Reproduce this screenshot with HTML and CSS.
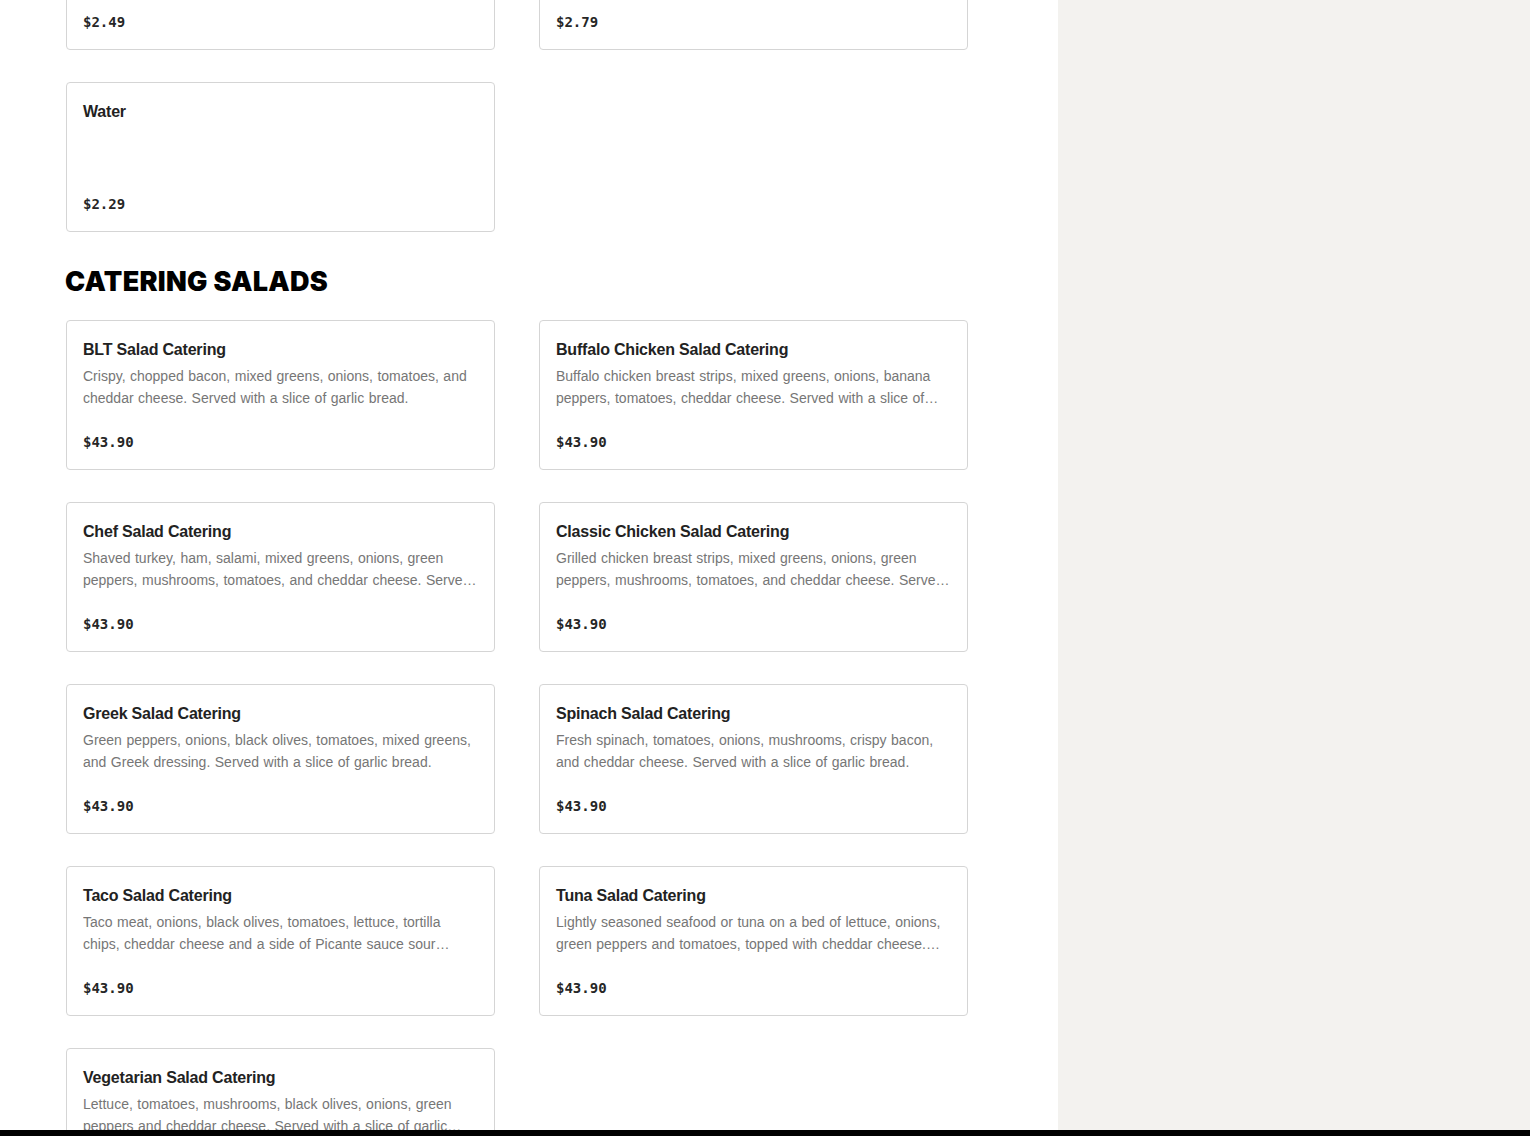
FILE: index.html
```html
<!DOCTYPE html>
<html lang="en">
<head>
<meta charset="utf-8">
<title>Catering Menu</title>
<link rel="stylesheet" href="styles.css">
</head>
<body>
<div class="layout">
  <main class="menu">
    <section class="section section-first">
      <div class="grid">
        <div class="card"><div class="title">Soft Drink</div><div class="desc"></div><div class="price">$2.49</div></div>
        <div class="card"><div class="title">Iced Tea</div><div class="desc"></div><div class="price">$2.79</div></div>
        <div class="card"><div class="title">Water</div><div class="desc"></div><div class="price">$2.29</div></div>
      </div>
    </section>
    <section class="section">
      <h2 class="heading">CATERING SALADS</h2>
      <div class="grid">
        <div class="card"><div class="title">BLT Salad Catering</div><div class="desc">Crispy, chopped bacon, mixed greens, onions, tomatoes, and cheddar cheese. Served with a slice of garlic bread.</div><div class="price">$43.90</div></div>
        <div class="card"><div class="title">Buffalo Chicken Salad Catering</div><div class="desc">Buffalo chicken breast strips, mixed greens, onions, banana peppers, tomatoes, cheddar cheese. Served with a slice of garlic bread.</div><div class="price">$43.90</div></div>
        <div class="card"><div class="title">Chef Salad Catering</div><div class="desc">Shaved turkey, ham, salami, mixed greens, onions, green peppers, mushrooms, tomatoes, and cheddar cheese. Served with a slice of garlic bread.</div><div class="price">$43.90</div></div>
        <div class="card"><div class="title">Classic Chicken Salad Catering</div><div class="desc">Grilled chicken breast strips, mixed greens, onions, green peppers, mushrooms, tomatoes, and cheddar cheese. Served with a slice of garlic bread.</div><div class="price">$43.90</div></div>
        <div class="card"><div class="title">Greek Salad Catering</div><div class="desc">Green peppers, onions, black olives, tomatoes, mixed greens, and Greek dressing. Served with a slice of garlic bread.</div><div class="price">$43.90</div></div>
        <div class="card"><div class="title">Spinach Salad Catering</div><div class="desc">Fresh spinach, tomatoes, onions, mushrooms, crispy bacon, and cheddar cheese. Served with a slice of garlic bread.</div><div class="price">$43.90</div></div>
        <div class="card"><div class="title">Taco Salad Catering</div><div class="desc">Taco meat, onions, black olives, tomatoes, lettuce, tortilla chips, cheddar cheese and a side of Picante sauce sour cream. Served with a slice of garlic bread.</div><div class="price">$43.90</div></div>
        <div class="card"><div class="title">Tuna Salad Catering</div><div class="desc">Lightly seasoned seafood or tuna on a bed of lettuce, onions, green peppers and tomatoes, topped with cheddar cheese. Served with a slice of garlic bread.</div><div class="price">$43.90</div></div>
        <div class="card"><div class="title">Vegetarian Salad Catering</div><div class="desc">Lettuce, tomatoes, mushrooms, black olives, onions, green peppers and cheddar cheese. Served with a slice of garlic bread.</div><div class="price">$43.90</div></div>
      </div>
    </section>
  </main>
  <aside class="side"></aside>
</div>
<div class="bottom-bar"></div>
</body>
</html>
```
FILE: styles.css
```css
html, body {
  margin: 0;
  padding: 0;
  height: 100%;
  overflow: hidden;
  background: #ffffff;
  font-family: "Liberation Sans", Arial, sans-serif;
}

.layout {
  display: flex;
  height: 1136px;
}

.menu {
  width: 1058px;
  flex: none;
  padding: 0 90px 0 66px;
  box-sizing: border-box;
  background: #ffffff;
}

.side {
  flex: 1;
  background: #f3f2ef;
}

.section-first {
  margin-top: -100px;
}

.heading {
  margin: 36px 0 0 -1px;
  height: 52px;
  font-family: "Inter", "Liberation Sans", sans-serif;
  font-weight: 900;
  font-size: 27px;
  line-height: 27px;
  letter-spacing: 0.3px;
  color: #000000;
}

.grid {
  display: grid;
  grid-template-columns: 429px 429px;
  column-gap: 44px;
  row-gap: 32px;
}

.card {
  height: 150px;
  box-sizing: border-box;
  border: 1px solid #d5d5d5;
  border-radius: 4px;
  padding: 17px 16px 17px 16px;
  display: flex;
  flex-direction: column;
  background: #ffffff;
}

.title {
  font-size: 16px;
  line-height: 24px;
  font-weight: bold;
  letter-spacing: -0.2px;
  color: #222222;
  margin-bottom: 3px;
}

.desc {
  font-size: 14px;
  line-height: 22px;
  word-spacing: 0.6px;
  color: #767676;
  display: -webkit-box;
  -webkit-line-clamp: 2;
  -webkit-box-orient: vertical;
  overflow: hidden;
}

.price {
  margin-top: auto;
  font-family: "DejaVu Sans Mono", "Liberation Mono", monospace;
  font-size: 14px;
  line-height: 20px;
  font-weight: bold;
  color: #262626;
}

.bottom-bar {
  position: fixed;
  left: 0;
  right: 0;
  bottom: 0;
  height: 6px;
  background: #000000;
}
```
